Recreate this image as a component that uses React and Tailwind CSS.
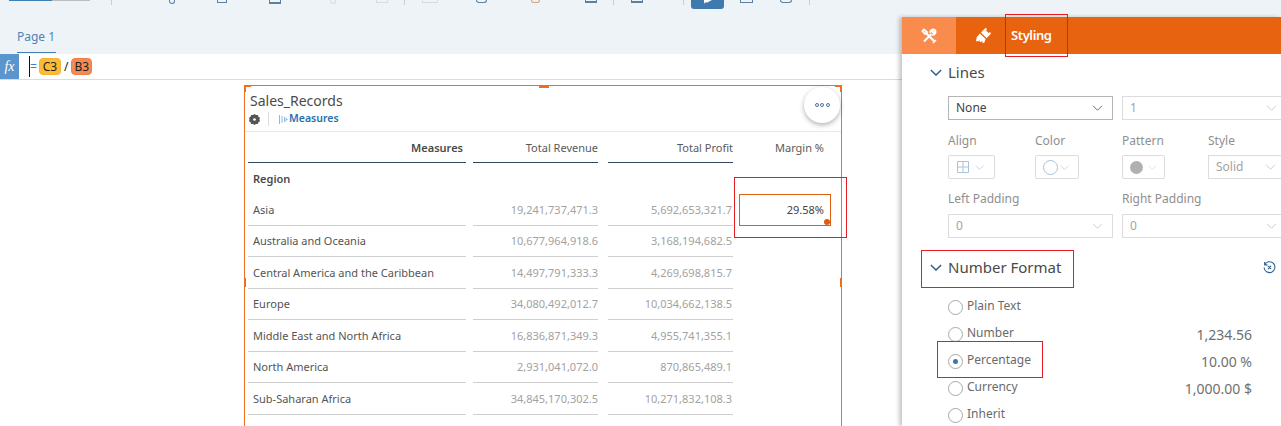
import React from 'react';

const rows = [
  ['Asia', '19,241,737,471.3', '5,692,653,321.7'],
  ['Australia and Oceania', '10,677,964,918.6', '3,168,194,682.5'],
  ['Central America and the Caribbean', '14,497,791,333.3', '4,269,698,815.7'],
  ['Europe', '34,080,492,012.7', '10,034,662,138.5'],
  ['Middle East and North Africa', '16,836,871,349.3', '4,955,741,355.1'],
  ['North America', '2,931,041,072.0', '870,865,489.1'],
  ['Sub-Saharan Africa', '34,845,170,302.5', '10,271,832,108.3'],
];

const Chevron = ({ className, width = 1.2 }) => (
  <svg viewBox="0 0 14 8" className={className} fill="none" stroke="currentColor" strokeWidth={width}>
    <path d="M1 1l6 6 6-6" />
  </svg>
);

const Select = ({ value, className, dark }) => (
  <div className={`flex h-[24px] shrink-0 items-center justify-between border pl-[7px] pr-[9px] text-[12px] ${dark ? 'border-[#b4b4b4] text-[#3f3f3f]' : 'border-[#dcdcdc] text-[#a3a3a3]'} ${className}`}>
    <span>{value}</span>
    <Chevron className={`h-[6px] w-[11px] ${dark ? 'text-[#3c6a94]' : 'text-[#b9cbdc]'}`} />
  </div>
);

const Radio = ({ label, value, checked }) => (
  <div className="flex h-[27px] items-center text-[12px] text-[#6a6a6a]">
    <span className="flex h-[15px] w-[15px] items-center justify-center rounded-full border border-[#a8a8a8] bg-white">
      {checked && <span className="h-[5px] w-[5px] rounded-full bg-[#3a77b0]" />}
    </span>
    <span className="ml-[4px] -translate-y-[2px]">{label}</span>
    {value && <span className="ml-auto text-[14px] text-[#6f6f6f]">{value}</span>}
  </div>
);

const Label = ({ children }) => (
  <div className="text-[12px] leading-[16px] text-[#8f8f8f]">{children}</div>
);

const SectionHeader = ({ title, children, className = '' }) => (
  <div className={`-ml-[18px] flex h-[37px] items-center text-[15px] text-[#4a4a4a] ${className}`}>
    <Chevron className="mr-[6px] h-[7px] w-[12px] text-[#2f5f8c]" width={1.7} />
    <span>{title}</span>
    {children}
  </div>
);

const Widget = () => (
  <div className="relative ml-[244px] mt-[5px] h-[400px] w-[598px] border border-[#ee6f22] bg-white">
    <span className="absolute -left-px -top-px h-[7px] w-[7px] border-l-2 border-t-2 border-[#ee6f22]" />
    <span className="absolute left-[294px] -top-px h-[3px] w-[10px] bg-[#ee6f22]" />
    <span className="absolute -right-px -top-px h-[7px] w-[7px] border-r-2 border-t-2 border-[#ee6f22]" />
    <span className="absolute -left-px top-[192px] h-[9px] w-[2px] bg-[#ee6f22]" />
    <span className="absolute -right-px top-[192px] h-[9px] w-[2px] bg-[#ee6f22]" />

    <div className="h-[46px] border-b border-[#e8e8e8] pl-[5px]">
      <div className="pt-[6px] text-[14px] leading-[18px] text-[#4b4b4b]">Sales_Records</div>
      <div className="flex h-[18px] items-center">
        <svg viewBox="0 0 10 10" className="h-[11px] w-[11px] -translate-x-px text-[#555]" fill="currentColor">
          <path d="M5 0l1.3 1 1.7-.1.6 1.6 1.4.9-.5 1.6.5 1.6-1.4.9-.6 1.6-1.7-.1L5 10 3.7 9l-1.7.1-.6-1.6L0 6.6.5 5 0 3.4l1.4-.9L2 .9 3.7 1z" />
          <circle cx="5" cy="5" r="1.2" fill="#fff" />
        </svg>
        <span className="ml-[7px] h-[14px] w-px bg-[#dcdcdc]" />
        <svg viewBox="0 0 9 9" className="ml-[10px] h-[9px] w-[9px] text-[#8fbbe0]" fill="currentColor">
          <rect x="0" y="0" width="1" height="9" />
          <rect x="2.5" y="1" width="1" height="7" />
          <rect x="5" y="2" width="1.4" height="5" />
          <path d="M7 3l2 1.5L7 6z" />
        </svg>
        <span className="ml-px text-[10.5px] font-semibold text-[#1f72b0]">Measures</span>
      </div>
    </div>

    <button className="absolute right-[1px] top-[1px] flex h-[36px] w-[36px] items-center justify-center gap-[1.5px] rounded-full bg-white shadow-[0_2px_5px_rgba(0,0,0,0.3)]">
      <span className="h-[4px] w-[4px] rounded-full border border-[#4f7299]" />
      <span className="h-[4px] w-[4px] rounded-full border border-[#4f7299]" />
      <span className="h-[4px] w-[4px] rounded-full border border-[#4f7299]" />
    </button>

    <div className="grid grid-cols-[218px_125px_125px_98px] gap-x-[7px] pl-[3px] pr-[3px] text-[11px]">
      <div className="h-[31px] border-b border-[#32475b] pr-[3px] pt-[8px] text-right font-semibold leading-[15px] text-[#4a4a4a]">Measures</div>
      <div className="h-[31px] border-b border-[#32475b] pt-[8px] text-right leading-[15px] text-[#5a5a5a]">Total Revenue</div>
      <div className="h-[31px] w-[125px] translate-x-[3px] border-b border-[#32475b] pt-[8px] text-right leading-[15px] text-[#5a5a5a]">Total Profit</div>
      <div className="h-[31px] pr-[11px] pt-[8px] text-right leading-[15px] text-[#5a5a5a]">Margin %</div>

      <div className="col-span-4 h-[31px] pl-[5px] pt-[8px] font-semibold leading-[15px] text-[#4a4a4a]">Region</div>

      {rows.map((r, i) => (
        <React.Fragment key={r[0]}>
          <div className="flex h-[31.5px] items-center border-b border-[#cfcfcf] pl-[5px] pt-[1.6px] text-[#555]">{r[0]}</div>
          <div className="flex h-[31.5px] items-center justify-end border-b border-[#cfcfcf] pt-[1.6px] text-[#a2a2a2]">{r[1]}</div>
          <div className="flex h-[31.5px] w-[125px] translate-x-[3px] items-center justify-end border-b border-[#cfcfcf] pr-[1px] pt-[1.6px] text-[#a2a2a2]">{r[2]}</div>
          <div className="flex h-[31.5px] items-center">
            {i === 0 && (
              <div className="relative ml-[2px] flex h-[32px] w-[92px] items-center justify-end border border-[#dc5e10] pr-[6px] text-[#444]">
                29.58%
                <span className="absolute bottom-0 right-0 h-[6px] w-[6px] rounded-full bg-[#dc5e10]" />
              </div>
            )}
          </div>
        </React.Fragment>
      ))}
    </div>
  </div>
);

const Panel = () => (
  <div className="absolute bottom-0 left-[902px] right-0 top-[17px] overflow-hidden bg-white shadow-[-3px_0_4px_rgba(0,0,0,0.22)]">
    <div className="flex h-[37px] bg-[#e8630f] text-white">
      <div className="flex w-[54px] items-center justify-center bg-[#f98c4d]">
        <svg viewBox="0 0 16 16" className="h-[16px] w-[16px]" fill="none" stroke="currentColor">
          <path strokeWidth="2.2" d="M3 13.5L10.5 6" />
          <path strokeWidth="1.8" d="M9.2 4.8A3 3 0 0 1 13 1.6L11 3.6l1.5 1.5 2-2a3 3 0 0 1-3.3 3.7" />
          <path strokeWidth="2.2" d="M5.5 5.5L13 13" />
          <path strokeWidth="1.8" d="M1.5 3L3 1.5 6 4 4 6z" />
          <path strokeWidth="1.5" d="M12 15l3-3" />
        </svg>
      </div>
      <div className="flex w-[54px] items-center justify-center">
        <svg viewBox="0 0 16 16" className="h-[17px] w-[17px]" fill="currentColor">
          <path d="M10 .8l1.4 1.2-1 1.2 2.4 2.4 1.2-1 1.2 1.4-4.3 4.5-5.3-5.4z" />
          <path d="M4.6 6L10 11.4 8.6 15l-2-.4.6-1.8-1.6 1.4-1.4-.4.8-1.6-1.6 1.2L1 13.4 1.6 9.6z" />
        </svg>
      </div>
      <div className="ml-px flex items-center text-[13px] font-semibold tracking-[-0.4px]">Styling</div>
    </div>

    <div className="pl-[46px]">
      <SectionHeader title="Lines" />
      <div className="mt-[5px] flex gap-[9px]">
        <Select value="None" dark className="w-[165px]" />
        <Select value="1" className="w-[165px]" />
      </div>

      <div className="mt-[13px] grid grid-cols-[87px_87px_86px_80px]">
        <Label>Align</Label>
        <Label>Color</Label>
        <Label>Pattern</Label>
        <Label>Style</Label>
      </div>
      <div className="mt-[6px] grid grid-cols-[87px_87px_86px_78px]">
        <div className="flex h-[24px] w-[47px] items-center rounded-[2px] border border-[#dcdcdc] pl-[8px]">
          <svg viewBox="0 0 12 12" className="h-[12px] w-[12px] text-[#a9c4da]" fill="none" stroke="currentColor">
            <path d="M.5.5h11v11H.5zM.5 6h11M6 .5v11" />
          </svg>
          <Chevron className="ml-[6px] h-[5px] w-[9px] text-[#b9cbdc]" />
        </div>
        <div className="flex h-[24px] w-[44px] items-center rounded-[2px] border border-[#dcdcdc] pl-[7px]">
          <span className="h-[15px] w-[15px] rounded-full border border-[#a9c4da]" />
          <Chevron className="ml-[2px] h-[5px] w-[9px] text-[#b9cbdc]" />
        </div>
        <div className="flex h-[24px] w-[43px] items-center rounded-[2px] border border-[#dcdcdc] pl-[7px]">
          <span className="h-[13px] w-[13px] rounded-full bg-[#b0b0b0]" />
          <Chevron className="ml-[5px] h-[5px] w-[9px] text-[#d5dde5]" />
        </div>
        <Select value="Solid" className="w-[78px]" />
      </div>

      <div className="mt-[12px] grid grid-cols-[174px_165px]">
        <Label>Left Padding</Label>
        <Label>Right Padding</Label>
      </div>
      <div className="mt-[7px] flex gap-[9px]">
        <Select value="0" className="w-[165px]" />
        <Select value="0" className="w-[165px]" />
      </div>

      <SectionHeader title="Number Format" className="mt-[11px]">
        <svg viewBox="0 0 12 12" className="ml-auto mr-[5px] h-[13px] w-[13px] text-[#31618f]" fill="none" stroke="currentColor" strokeWidth="1">
          <path d="M1.5 3.5A5 5 0 1 1 1 6M1.5 1v2.6h2.6M4.5 4.5l3 3M7.5 4.5l-3 3" />
        </svg>
      </SectionHeader>

      <div className="mt-[8px] pr-[29px]">
        <Radio label="Plain Text" />
        <Radio label="Number" value="1,234.56" />
        <Radio label="Percentage" value="10.00 %" checked />
        <Radio label="Currency" value="1,000.00 $" />
        <Radio label="Inherit" />
      </div>
    </div>
  </div>
);

const ToolSep = ({ className }) => <span className={`h-[5px] w-px shrink-0 bg-[#c9ced3] ${className}`} />;

// the toolbar is cut off by the top of the screenshot, only icon bottoms show
const Toolbar = () => (
  <div className="flex h-[9px] items-start overflow-hidden">
    <span className="ml-[9px] h-[1px] w-[43px] shrink-0 bg-[#3f7fb5]" />
    <span className="h-[1px] w-[38px] shrink-0 bg-[#bdbdbd]" />
    <ToolSep className="ml-[21px]" />
    <span className="ml-[57px] h-[4px] w-[6px] shrink-0 rounded-b-full border-b border-l border-r border-[#5d7fa3]" />
    <span className="ml-[42px] h-[3px] w-[10px] shrink-0 border-b border-l border-r border-[#5d7fa3]" />
    <span className="ml-[42px] h-[4px] w-[12px] shrink-0 border-b-2 border-l border-r border-[#5d7fa3]" />
    <span className="ml-[49px] h-[4px] w-[6px] shrink-0 rounded-b-full border-b border-l border-r border-[#d6dce2]" />
    <span className="ml-[40px] h-[3px] w-[12px] shrink-0 border-b border-l border-r border-[#d6dce2]" />
    <ToolSep className="ml-[16px]" />
    <span className="ml-[17px] h-[3px] w-[16px] shrink-0 border-b border-l border-r border-[#d6dce2]" />
    <span className="ml-[38px] h-[3px] w-[11px] shrink-0 rounded-b-full border-b border-l border-r border-[#5d7fa3]" />
    <span className="ml-[44px] h-[3px] w-[9px] shrink-0 rounded-b-full border-b border-l border-r border-[#e0a06a]" />
    <span className="ml-[45px] h-[3px] w-[12px] shrink-0 border-b-2 border-l border-r border-[#5d7fa3]" />
    <ToolSep className="ml-[16px]" />
    <span className="ml-[17px] h-[3px] w-[12px] shrink-0 border-b-2 border-l border-r border-[#5d7fa3]" />
    <ToolSep className="ml-[40px]" />
    <span className="ml-[7px] flex h-[9px] w-[33px] shrink-0 items-start justify-center rounded-b-[3px] bg-[#3f7aae]">
      <svg viewBox="0 0 12 5" className="h-[4px] w-[10px]" fill="#fff">
        <path d="M1 0h10L5 3 2 3 1 5z" />
      </svg>
    </span>
    <span className="ml-[16px] h-[3px] w-[13px] shrink-0 border-b border-l border-r border-[#5d7fa3]" />
    <span className="ml-[27px] h-[3px] w-[12px] shrink-0 rounded-b-full border-b border-l border-r border-[#5d7fa3]" />
    <ToolSep className="ml-[17px]" />
  </div>
);

export default function App() {
  return (
    <div className="relative h-[426px] w-[1281px] overflow-hidden bg-white font-['Noto_Sans',sans-serif]">
      <div className="h-[54px] bg-[#eef3f8]">
        <Toolbar />
        <div className="ml-[17px] mt-[18px] h-[26px] w-[39px] whitespace-nowrap border-b border-[#3f7fb5] pt-[1px] text-[12px] text-[#4d84b5]">Page 1</div>
      </div>
      <div className="flex h-[26px] items-start border-b border-[#dcdcdc]">
        <div className="flex h-[25px] w-[19px] items-center justify-center bg-[#5a96cd] font-['Liberation_Serif',serif] text-[14px] italic text-white">fx</div>
        <div className="ml-[10px] flex h-[25px] items-center text-[12px] text-[#222]">
          <span className="h-[21px] w-px bg-[#111]" />
          <span className="-ml-px pl-[1px] text-[#3f7fb5]">=</span>
          <span className="ml-[2px] w-[22px] rounded-[4px] border border-[#f5b13a] bg-[#fdbb34] text-center leading-[15px]">C3</span>
          <span className="mx-[3px]">/</span>
          <span className="w-[21px] rounded-[4px] border border-[#ee7f48] bg-[#f58a52] text-center leading-[15px]">B3</span>
        </div>
      </div>
      <Widget />
      <Panel />

      {/* red annotation boxes */}
      <div className="absolute left-[1005px] top-[14px] h-[43px] w-[63px] border border-[#e51c23]" />
      <div className="absolute left-[921px] top-[250px] h-[38px] w-[153px] border border-[#e51c23]" />
      <div className="absolute left-[937px] top-[341px] h-[37px] w-[106px] border border-[#e51c23]" />
      <div className="absolute left-[734px] top-[177px] h-[61px] w-[113px] border border-[#e51c23]" />
    </div>
  );
}
